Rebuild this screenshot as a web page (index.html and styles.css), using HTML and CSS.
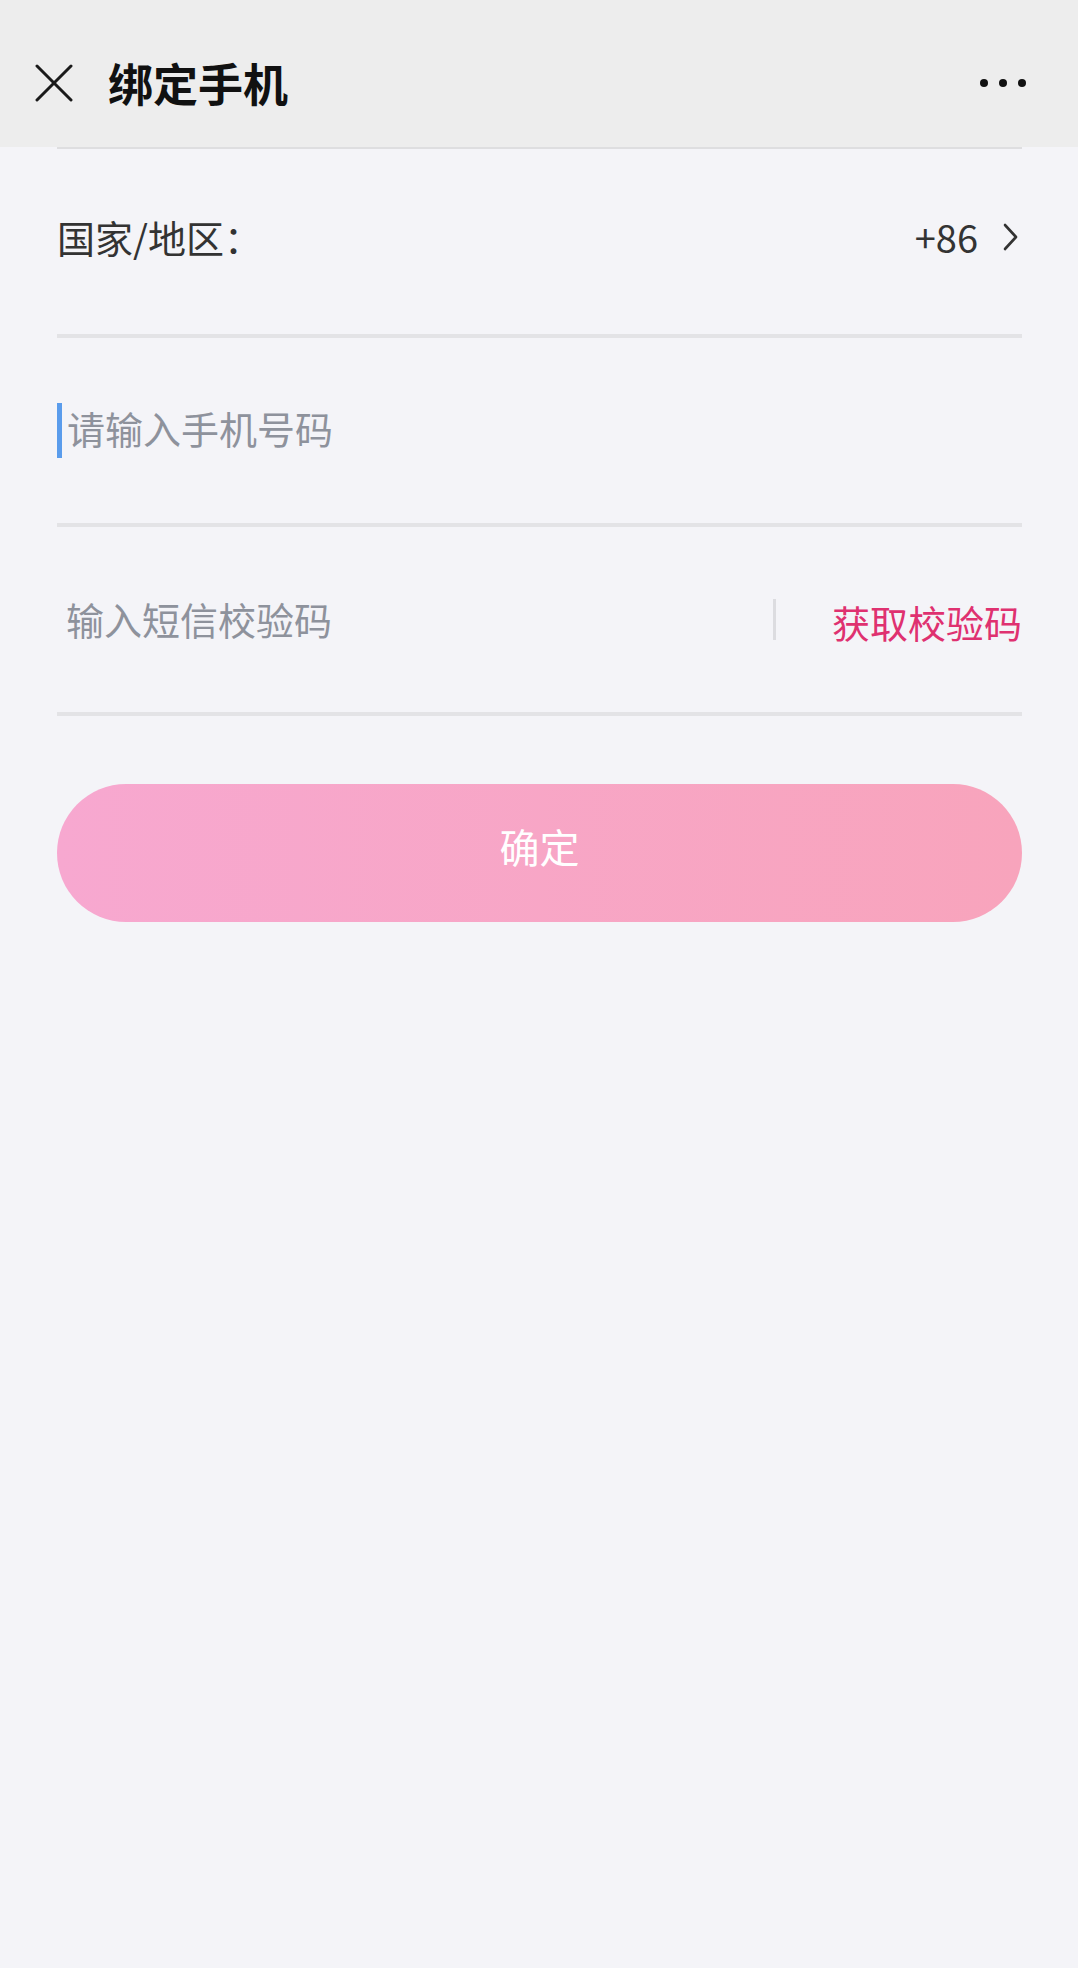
FILE: index.html
```html
<!DOCTYPE html>
<html lang="zh-CN">
<head>
    <meta charset="UTF-8">
    <meta name="viewport" content="width=device-width, initial-scale=1.0">
    <title>绑定手机</title>
    <link rel="stylesheet" href="styles.css">
</head>
<body>
    <div class="header">
        <svg class="close-icon" width="38" height="38" viewBox="0 0 38 38">
            <line x1="2" y1="2" x2="36" y2="36" stroke="#1a1a1a" stroke-width="3" stroke-linecap="round"/>
            <line x1="36" y1="2" x2="2" y2="36" stroke="#1a1a1a" stroke-width="3" stroke-linecap="round"/>
        </svg>
        <div class="title">绑定手机</div>
        <div class="more">
            <span class="dot"></span>
            <span class="dot"></span>
            <span class="dot"></span>
        </div>
    </div>

    <div class="form">
        <div class="row region-row">
            <div class="label">国家/地区：</div>
            <div class="region">
                <span>+86</span>
                <svg class="chevron" width="15" height="28" viewBox="0 0 15 28">
                    <polyline points="2,2 13,14 2,26" fill="none" stroke="#333" stroke-width="2.6" stroke-linejoin="round" stroke-linecap="round"/>
                </svg>
            </div>
        </div>

        <div class="row">
            <span class="caret"></span>
            <input class="field phone-input" type="tel" placeholder="请输入手机号码">
        </div>

        <div class="row">
            <input class="field code-input" type="text" placeholder="输入短信校验码">
            <span class="divider"></span>
            <span class="get-code">获取校验码</span>
        </div>

        <button class="submit">确定</button>
    </div>
</body>
</html>
```

FILE: styles.css
```css
body {
    margin: 0;
    background: #f4f4f8;
    font-family: "Noto Sans CJK SC", "Noto Sans", sans-serif;
    color: #333;
    min-height: 1968px;
}

.header {
    height: 147px;
    box-sizing: border-box;
    padding: 18px 52px 0 35px;
    background: #ededed;
    display: flex;
    align-items: center;
}

.close-icon {
    display: block;
    flex-shrink: 0;
}

.title {
    margin-left: 35px;
    font-size: 45px;
    font-weight: bold;
    color: #111;
    flex: 1;
}

.more {
    display: flex;
    gap: 11px;
}

.dot {
    width: 8px;
    height: 8px;
    border-radius: 50%;
    background: #111;
}

.form {
    margin: 0 56px 0 57px;
    border-top: 2px solid #dedee0;
}

.row {
    height: 185px;
    border-bottom: 4px solid #e3e3e6;
    display: flex;
    align-items: center;
}

.region-row {
    justify-content: space-between;
    box-sizing: border-box;
    height: 189px;
    padding-bottom: 10px;
}

.label {
    font-size: 38px;
    color: #333;
}

.region {
    display: flex;
    align-items: center;
    gap: 25px;
    padding-right: 4px;
    font-size: 38px;
    color: #333;
}

.chevron {
    display: block;
}

.caret {
    width: 5px;
    height: 55px;
    background: #5a9cec;
    flex-shrink: 0;
}

.field {
    flex: 1;
    min-width: 0;
    border: none;
    outline: none;
    background: transparent;
    font-family: inherit;
    font-size: 38px;
    color: #333;
    height: 56px;
    padding: 0;
}

.field::placeholder {
    color: #8e929c;
}

.phone-input {
    padding-left: 5px;
    padding-bottom: 6px;
}

.code-input {
    padding-left: 9px;
    padding-bottom: 2px;
}

.divider {
    width: 3px;
    height: 41px;
    background: #dcdce0;
    margin-right: 56px;
}

.get-code {
    font-size: 38px;
    color: #df3170;
    padding-top: 4px;
}

.submit {
    display: block;
    width: 100%;
    height: 138px;
    margin-top: 68px;
    border: none;
    border-radius: 69px;
    background: linear-gradient(90deg, #f7a8d0 0%, #f8a4bc 100%);
    color: #fff;
    font-family: inherit;
    font-size: 40px;
    padding-bottom: 15px;
}
```
